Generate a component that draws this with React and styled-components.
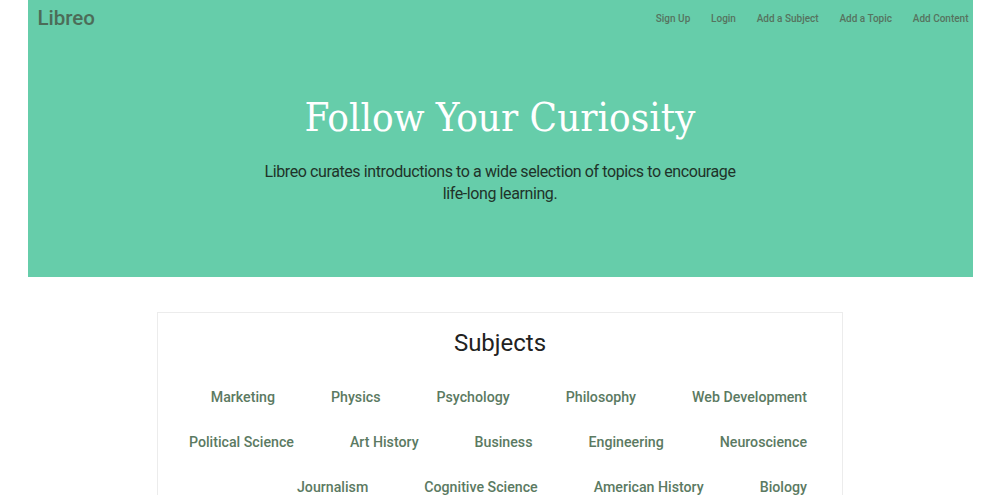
import React from 'react';
import styled, { createGlobalStyle } from 'styled-components';

const GlobalStyle = createGlobalStyle`
  * {
    box-sizing: border-box;
  }
  body {
    margin: 0;
    background: #fff;
    font-family: Roboto, "Liberation Sans", sans-serif;
  }
`;

const Page = styled.div`
  width: 945px;
  margin: 0 auto;
`;

const Hero = styled.header`
  background-color: #66cdaa;
  height: 277px;
  display: flex;
  flex-direction: column;
`;

const NavBar = styled.nav`
  display: flex;
  align-items: center;
  justify-content: space-between;
  height: 36px;
  padding: 0 4px 0 10px;
`;

const Logo = styled.a`
  font-size: 20.5px;
  font-weight: 500;
  color: #4c6c58;
  text-decoration: none;
`;

const NavLinks = styled.div`
  display: flex;
  gap: 20.8px;
`;

const NavLink = styled.a`
  font-size: 10px;
  font-weight: 500;
  color: #56735f;
  text-decoration: none;
`;

const HeroBody = styled.div`
  display: flex;
  flex-direction: column;
  align-items: center;
  padding-top: 58px;
`;

const Title = styled.h1`
  margin: 0;
  font-family: "DejaVu Serif Condensed", "DejaVu Serif", serif;
  font-weight: 400;
  font-size: 40px;
  color: #fff;
`;

const Tagline = styled.p`
  margin: 21px 0 0;
  width: 480px;
  text-align: center;
  font-size: 16px;
  letter-spacing: -0.4px;
  line-height: 22px;
  color: #1f3329;
`;

const Card = styled.section`
  width: 686px;
  margin: 35px auto 0;
  border: 1px solid #ececec;
  border-bottom: none;
  padding-top: 16px;
`;

const CardTitle = styled.h2`
  margin: 0 0 32px;
  text-align: center;
  font-size: 24px;
  font-weight: 400;
  color: #222;
`;

const SubjectRows = styled.div`
  display: flex;
  flex-direction: column;
  gap: 28px;
  padding-right: 7px;
`;

const SubjectRow = styled.div`
  display: flex;
  justify-content: flex-end;
`;

const Subject = styled.a`
  margin: 0 28px;
  font-size: 14.2px;
  font-weight: 500;
  line-height: 17px;
  white-space: nowrap;
  color: #5b7a62;
  text-decoration: none;
`;

const navItems = ['Sign Up', 'Login', 'Add a Subject', 'Add a Topic', 'Add Content'];

const subjectRows = [
  ['Marketing', 'Physics', 'Psychology', 'Philosophy', 'Web Development'],
  ['Political Science', 'Art History', 'Business', 'Engineering', 'Neuroscience'],
  ['Journalism', 'Cognitive Science', 'American History', 'Biology']
];

export default function App() {
  return (
    <Page>
      <GlobalStyle />
      <Hero>
        <NavBar>
          <Logo href="#">Libreo</Logo>
          <NavLinks>
            {navItems.map(item => (
              <NavLink key={item} href="#">{item}</NavLink>
            ))}
          </NavLinks>
        </NavBar>
        <HeroBody>
          <Title>Follow Your Curiosity</Title>
          <Tagline>
            Libreo curates introductions to a wide selection of topics to encourage life-long learning.
          </Tagline>
        </HeroBody>
      </Hero>
      <Card>
        <CardTitle>Subjects</CardTitle>
        <SubjectRows>
          {subjectRows.map((row, i) => (
            <SubjectRow key={i}>
              {row.map(s => (
                <Subject key={s} href="#">{s}</Subject>
              ))}
            </SubjectRow>
          ))}
        </SubjectRows>
      </Card>
    </Page>
  );
}
